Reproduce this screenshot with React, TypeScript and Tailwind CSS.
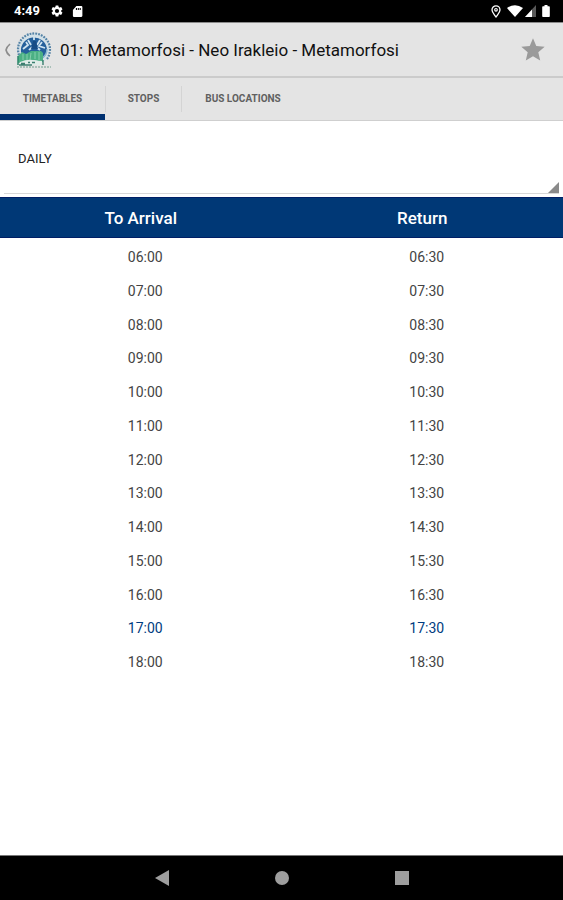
import { useState } from "react";

const times: [string, string][] = [
  ["06:00", "06:30"],
  ["07:00", "07:30"],
  ["08:00", "08:30"],
  ["09:00", "09:30"],
  ["10:00", "10:30"],
  ["11:00", "11:30"],
  ["12:00", "12:30"],
  ["13:00", "13:30"],
  ["14:00", "14:30"],
  ["15:00", "15:30"],
  ["16:00", "16:30"],
  ["17:00", "17:30"],
  ["18:00", "18:30"],
];

const nextDeparture = "17:00";

function StatusBar() {
  return (
    <div className="flex h-[22px] items-center bg-black pr-[13px] pl-[14px] text-white">
      <span className="w-9 text-[13px] leading-4 font-bold">4:49</span>
      <svg className="size-[14px]" viewBox="0 0 24 24" fill="currentColor" aria-hidden="true">
        <path d="M19.14 12.94c.04-.3.06-.61.06-.94s-.02-.64-.07-.94l2.03-1.58a.49.49 0 0 0 .12-.61l-1.92-3.32a.49.49 0 0 0-.59-.22l-2.39.96a7 7 0 0 0-1.62-.94l-.36-2.54a.48.48 0 0 0-.48-.41h-3.84a.48.48 0 0 0-.47.41l-.36 2.54a7.3 7.3 0 0 0-1.63.94l-2.39-.96a.48.48 0 0 0-.59.22L2.74 8.87a.47.47 0 0 0 .12.61l2.03 1.58a6 6 0 0 0 0 1.88l-2.03 1.58a.49.49 0 0 0-.12.61l1.92 3.32c.12.22.37.29.59.22l2.39-.96c.5.38 1.03.7 1.62.94l.36 2.54c.05.24.24.41.48.41h3.84c.24 0 .44-.17.47-.41l.36-2.54a7 7 0 0 0 1.62-.94l2.39.96c.22.08.47 0 .59-.22l1.92-3.32a.47.47 0 0 0-.12-.61zM12 15.6a3.6 3.6 0 1 1 0-7.2 3.6 3.6 0 0 1 0 7.2z" />
      </svg>
      <svg className="ml-[7px] size-[13px]" viewBox="0 0 24 24" fill="currentColor" aria-hidden="true">
        <path fillRule="evenodd" d="M19 2H10L3.5 9V20.5a1.500 1.500 0 0 0 1.500 1.500h14a2 2 0 0 0 2-2V4a2 2 0 0 0-2-2zM9 5.500h2V9H9zm3.500 0h2V9h-2zm3.500 0h2V9h-2z" />
      </svg>
      <div className="ml-auto flex items-center">
        <svg className="h-[13px] w-[10px]" viewBox="0 0 10 13" fill="none" stroke="currentColor" aria-hidden="true">
          <path d="M5 12C3 9 1 7.200 1 4.900a4 4 0 0 1 8 0C9 7.200 7 9 5 12z" strokeWidth="1.300" />
          <circle cx="5" cy="4.800" r="1.300" strokeWidth="1.200" />
        </svg>
        <svg className="ml-[6px] h-[12px] w-[16px]" viewBox="0 0 16 12" fill="currentColor" aria-hidden="true">
          <path d="M8 12 0 3Q8-2.600 16 3z" />
        </svg>
        <svg className="ml-[2px] h-[12px] w-[11px]" viewBox="0 0 11 12" fill="currentColor" aria-hidden="true">
          <path d="M11 0v12H0z" opacity=".35" />
          <path d="M7 4.400V12H0z" />
        </svg>
        <svg className="ml-[6px] h-[12px] w-[8px]" viewBox="0 0 8 12" fill="currentColor" aria-hidden="true">
          <path d="M2.500 0h3v1.200H7a.8.8 0 0 1 .8.8v9.200a.8.8 0 0 1-.8.8H1a.8.8 0 0 1-.8-.8V2a.8.8 0 0 1 .8-.8h1.500z" />
        </svg>
      </div>
    </div>
  );
}

function CityLogo() {
  return (
    <svg className="size-9" viewBox="0 0 36 36" aria-hidden="true">
      <circle cx="18" cy="17" r="16" fill="#d3e1e8" />
      <path d="M3 23a16 16 0 1 1 31-6q0 6-3 10" fill="none" stroke="#5583a6" strokeWidth="2.200" strokeDasharray="1.800 1.100" />
      <path d="M5 20a13 13 0 0 1 26-3q0 6-5 10H10z" fill="#24609b" />
      <path d="M7 17l5-4-2-3M12 8l3 5M24 8l-3 5M26 10l-3 4 6 2M13 18q5-6 11 0M18 5v3" stroke="#cfe4f1" strokeWidth="1.800" fill="none" />
      <path d="M17 9h3l2 8h-7z" fill="#174d86" />
      <path d="M26 26q5-3 5-9" fill="none" stroke="#8ab7cf" strokeWidth="1.500" />
      <path d="M2 24l4-4 4 2 5-3h10l2 2v9l-9-2-10 2-6 1z" fill="#4bb084" />
      <path d="M7 22v6M11 22v6M15 21l-1 7M19 20v7M23 20v8" stroke="#86cfad" strokeWidth="1" />
      <path d="M2 24v9" stroke="#2e856b" strokeWidth="1.500" />
      <path d="M4 30q7-3 13-2t9 1v4H4z" fill="#e0ece8" />
      <path d="M5 31.500h4m3-1h2m2 0h3M27 28v5M3 33h13" stroke="#3c7f70" strokeWidth="1.400" />
      <path d="M1 35h34" stroke="#a9c0b8" strokeWidth="1.800" strokeDasharray="2 1" />
    </svg>
  );
}

function ActionBar() {
  const [starred, setStarred] = useState(false);
  return (
    <header className="flex h-14 items-center border-t border-b-2 border-t-[#8a8a8a] border-b-[#cbcbcb] bg-[#e4e4e4] pr-4 pl-1">
      <button type="button" aria-label="Back" className="flex items-center">
        <svg className="h-4 w-2" viewBox="0 0 8 16" fill="none" stroke="#8c8c8c" strokeWidth="1.600" aria-hidden="true">
          <path d="M6 2Q2.500 5 2 8q.5 3 4 6" />
        </svg>
        <span className="ml-1">
          <CityLogo />
        </span>
      </button>
      <h1 className="ml-2 flex-1 text-[17px] leading-6 text-[#111]">01: Metamorfosi - Neo Irakleio - Metamorfosi</h1>
      <button type="button" aria-label="Favourite" aria-pressed={starred} onClick={() => setStarred(!starred)}>
        <svg className="size-7" viewBox="0 0 24 24" fill={starred ? "#003876" : "#9a9a9a"} aria-hidden="true">
          <path d="M12 17.270 18.180 21l-1.640-7.030L22 9.240l-7.190-.61L12 2 9.190 8.630 2 9.240l5.460 4.730L5.820 21z" />
        </svg>
      </button>
    </header>
  );
}

function Tabs() {
  const tab = "h-full text-[10px] leading-4 font-bold text-[#606060]";
  return (
    <nav className="flex h-[43px] items-stretch border-b border-[#cfcfcf] bg-[#e4e4e4]">
      <button type="button" className={`${tab} w-[105px] border-b-[6px] border-[#003070] pt-[6px]`}>
        TIMETABLES
      </button>
      <span className="my-2 w-px bg-[#d4d4d4]" />
      <button type="button" className={`${tab} w-[75px]`}>
        STOPS
      </button>
      <span className="my-2 w-px bg-[#d4d4d4]" />
      <button type="button" className={`${tab} w-[122px]`}>
        BUS LOCATIONS
      </button>
    </nav>
  );
}

function DayPicker() {
  return (
    <div className="relative mx-1 my-[3px] h-[70px] border-b border-[#d8d8d8]">
      <select
        aria-label="Day"
        className="block h-full w-full appearance-none bg-transparent px-[14px] text-[13px] leading-5 text-[#222] outline-none"
      >
        <option>DAILY</option>
      </select>
      <svg className="pointer-events-none absolute right-0 bottom-0 size-[11px]" viewBox="0 0 11 11" aria-hidden="true">
        <path d="M11 0v11H0z" fill="#8a8a8a" />
      </svg>
    </div>
  );
}

function Timetable() {
  return (
    <table className="h-[480px] w-full table-fixed border-collapse text-center">
      <thead>
        <tr className="h-10 border-y border-[#001f66] bg-[#003876] text-[17px] leading-6 text-white">
          <th className="p-0 font-medium">To Arrival</th>
          <th className="p-0 font-medium">Return</th>
        </tr>
      </thead>
      <tbody className="text-[14px] leading-5 text-[#444]">
        {times.map(([arrival, back]) => (
          <tr key={arrival} className={arrival === nextDeparture ? "text-[#003c80]" : ""}>
            <td className="pt-1 pr-0 pb-0 pl-[9px]">{arrival}</td>
            <td className="pt-1 pr-0 pb-0 pl-[9px]">{back}</td>
          </tr>
        ))}
      </tbody>
    </table>
  );
}

function NavigationBar() {
  return (
    <footer className="flex h-[45px] items-center justify-center gap-[106px] border-t border-[#777] bg-black text-[#9e9e9e]">
      <button type="button" aria-label="Back">
        <svg className="h-4 w-[14px]" viewBox="0 0 14 16" fill="currentColor" aria-hidden="true">
          <path d="M14 0v16L0 8z" />
        </svg>
      </button>
      <button type="button" aria-label="Home" className="size-[14px] rounded-full bg-current" />
      <button type="button" aria-label="Recent apps" className="size-[14px] bg-current" />
    </footer>
  );
}

export default function App() {
  return (
    <div className="flex min-h-screen flex-col bg-white font-['Roboto',sans-serif]">
      <StatusBar />
      <ActionBar />
      <Tabs />
      <main className="flex-1">
        <DayPicker />
        <Timetable />
      </main>
      <NavigationBar />
    </div>
  );
}
